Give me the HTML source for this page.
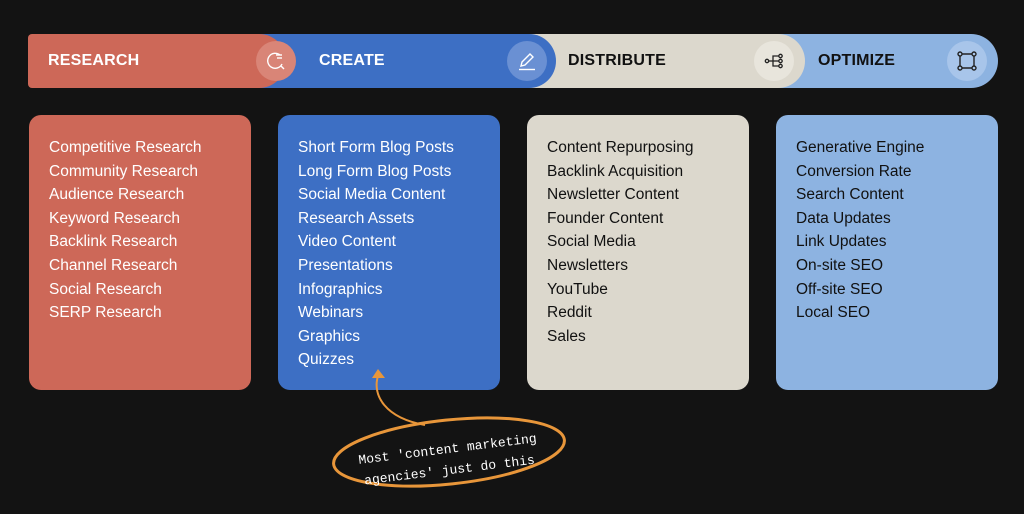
<!DOCTYPE html>
<html><head><meta charset="utf-8"><style>
body{margin:0;width:1024px;height:514px;background:#131313;position:relative;overflow:hidden;font-family:"Liberation Sans",sans-serif}
.seg{position:absolute;top:34px;height:54px;border-radius:0 27px 27px 0}
.seg span{position:absolute;left:20px;top:18px;font-weight:bold;font-size:16px;letter-spacing:0.2px}
.ic{position:absolute;top:7px;width:40px;height:40px;border-radius:50%}
.ic svg{position:absolute;left:10px;top:10px}
.card{position:absolute;top:115px;width:222px;height:275px;border-radius:12px;box-sizing:border-box;padding:21px 0 0 20px;font-size:15.5px;line-height:23.6px}
</style></head><body>
<div class="seg" style="left:516px;width:482px;background:#8db3e1;z-index:1"><span style="left:302px;color:#111">OPTIMIZE</span>
<div class="ic" style="left:431px;background:#a8c5ea"><svg width="20" height="20" viewBox="0 0 20 20" fill="none" stroke="#222" stroke-width="1.4"><rect x="3" y="3" width="14" height="14" rx="2"/><circle cx="3" cy="3" r="2" fill="#a8c5ea"/><circle cx="17" cy="3" r="2" fill="#a8c5ea"/><circle cx="3" cy="17" r="2" fill="#a8c5ea"/><circle cx="17" cy="17" r="2" fill="#a8c5ea"/></svg></div></div>
<div class="seg" style="left:270px;width:535px;background:#dcd8cd;z-index:2"><span style="left:298px;color:#111">DISTRIBUTE</span>
<div class="ic" style="left:484px;background:#e8e5dc"><svg width="20" height="20" viewBox="0 0 20 20" fill="none" stroke="#222" stroke-width="1.3"><circle cx="3" cy="10" r="1.7"/><line x1="5" y1="10" x2="15" y2="10"/><path d="M9 10V5h6M9 10v5h6"/><circle cx="16.5" cy="5" r="1.7"/><circle cx="16.5" cy="10" r="1.7"/><circle cx="16.5" cy="15" r="1.7"/></svg></div></div>
<div class="seg" style="left:200px;width:356px;background:#3d6fc4;z-index:3"><span style="left:119px;color:#fff">CREATE</span>
<div class="ic" style="left:307px;background:#6a90d3"><svg width="20" height="20" viewBox="0 0 20 20" fill="none" stroke="#fff" stroke-width="1.4"><path d="M4 15l1-4 8-8 3 3-8 8z"/><line x1="2" y1="18.5" x2="18" y2="18.5"/></svg></div></div>
<div class="seg" style="left:28px;width:258px;background:#cd6858;border-radius:4px 27px 27px 4px;z-index:4"><span style="color:#fff">RESEARCH</span>
<div class="ic" style="left:228px;background:#d98577"><svg width="20" height="20" viewBox="0 0 20 20" fill="none" stroke="#fff" stroke-width="1.4"><path d="M14 4A7.5 7.5 0 1 0 16 13"/><line x1="10" y1="4" x2="16" y2="4"/><line x1="11" y1="7" x2="16" y2="7"/><line x1="15" y1="15" x2="18" y2="18"/></svg></div></div>

<div class="card" style="left:29px;background:#cd6858;color:#fff">Competitive Research<br>Community Research<br>Audience Research<br>Keyword Research<br>Backlink Research<br>Channel Research<br>Social Research<br>SERP Research</div>
<div class="card" style="left:278px;background:#3d6fc4;color:#fff">Short Form Blog Posts<br>Long Form Blog Posts<br>Social Media Content<br>Research Assets<br>Video Content<br>Presentations<br>Infographics<br>Webinars<br>Graphics<br>Quizzes</div>
<div class="card" style="left:527px;background:#dcd8cd;color:#111">Content Repurposing<br>Backlink Acquisition<br>Newsletter Content<br>Founder Content<br>Social Media<br>Newsletters<br>YouTube<br>Reddit<br>Sales</div>
<div class="card" style="left:776px;background:#8db3e1;color:#111">Generative Engine<br>Conversion Rate<br>Search Content<br>Data Updates<br>Link Updates<br>On-site SEO<br>Off-site SEO<br>Local SEO</div>

<svg style="position:absolute;left:0;top:0" width="1024" height="514">
<path d="M378 376 C372 395 385 418 425 425" fill="none" stroke="#e8963a" stroke-width="2"/>
<path d="M372 378 L378 369 L385 378 Z" fill="#e8963a"/>
<ellipse cx="449" cy="452" rx="116" ry="32" transform="rotate(-6 449 452)" fill="none" stroke="#e8963a" stroke-width="3"/>
<text x="448" y="453" fill="#fff" font-family="Liberation Mono,monospace" font-size="13" text-anchor="middle" transform="rotate(-7 448 453)">Most 'content marketing</text>
<text x="450" y="474" fill="#fff" font-family="Liberation Mono,monospace" font-size="13" text-anchor="middle" transform="rotate(-7 450 474)">agencies' just do this</text>
</svg>
</body></html>
